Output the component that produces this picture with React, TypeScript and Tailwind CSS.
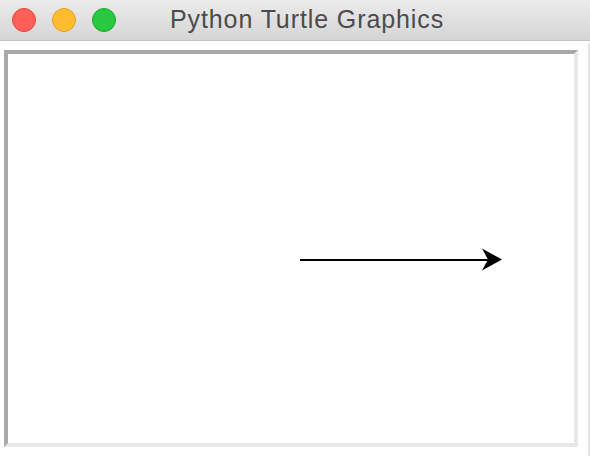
export default function App() {
  return (
    <div className="w-[590px] h-[456px] bg-white flex flex-col overflow-hidden" style={{ fontFamily: '"Liberation Sans", Arial, sans-serif' }}>
      {/* title bar */}
      <div className="h-[41px] shrink-0 flex items-center bg-gradient-to-b from-[#ebebeb] to-[#d5d5d5] border-b border-[#c4c4c4]">
        <div className="flex items-center gap-4 pl-3">
          <span className="w-6 h-6 rounded-full bg-[#fe5f57] border border-[#e2463f]"></span>
          <span className="w-6 h-6 rounded-full bg-[#febc2e] border border-[#dea123]"></span>
          <span className="w-6 h-6 rounded-full bg-[#28c840] border border-[#1aab29]"></span>
        </div>
        <div className="ml-[54px] text-[25px] tracking-[0.9px] text-[#4b4b4b] leading-none pb-[1px]">Python Turtle Graphics</div>
      </div>

      <div className="flex flex-1">
        <div className="pl-1 pt-[9px]">
          <div className="w-[574px] h-[397px] border-4 border-t-[#a8a8a8] border-l-[#a8a8a8] border-r-[#e8e8e8] border-b-[#e8e8e8] bg-white">
            <svg width="566" height="389" viewBox="8 54 566 389">
              <line x1="300" y1="260" x2="492" y2="260" stroke="#000" strokeWidth="2" />
              <polygon points="502,259.5 482,248.5 488,259.5 482,270.5" fill="#000" />
            </svg>
          </div>
        </div>
        <div className="ml-auto mt-[2px] w-[2px] bg-[#e6e6e6]"></div>
      </div>
    </div>
  );
}
